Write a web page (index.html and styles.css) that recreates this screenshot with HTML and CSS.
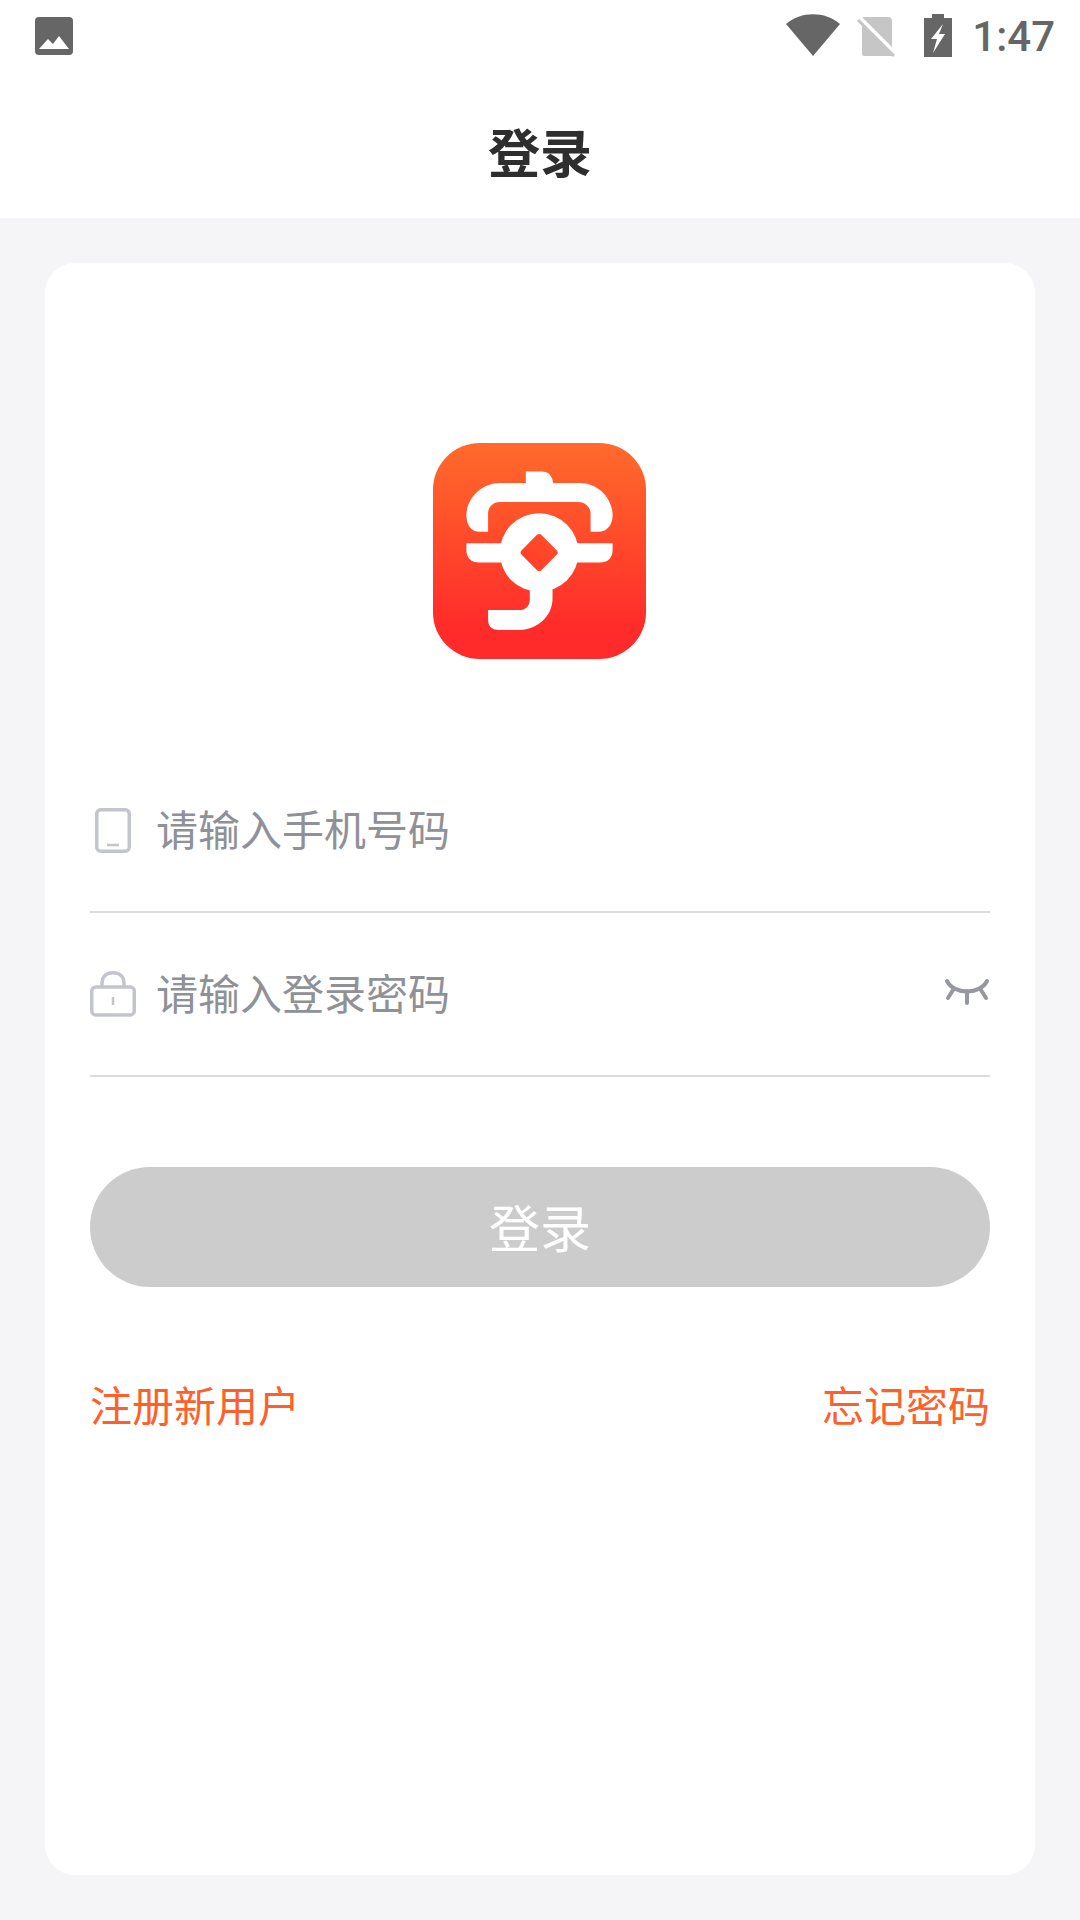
FILE: index.html
```html
<!DOCTYPE html>
<html lang="zh-CN">
<head>
    <meta charset="UTF-8">
    <meta name="viewport" content="width=device-width, initial-scale=1.0">
    <title>登录</title>
    <link rel="stylesheet" href="styles.css">
</head>
<body>
    <div class="status-bar">
        <svg class="icon-photo" width="38" height="38" viewBox="0 0 38 38">
            <rect width="38" height="38" rx="4" fill="#666"/>
            <path d="M4 32 L13 22 L18 27 L24 19 L34 32 Z" fill="#fff"/>
        </svg>
        <div class="status-right">
            <svg class="icon-wifi" width="54" height="42" viewBox="0 0 54 42">
                <path d="M0 10 C15 -3 39 -3 54 10 L27 42 Z" fill="#666"/>
            </svg>
            <svg class="icon-sim" width="40" height="42" viewBox="0 0 40 42">
                <path d="M5 4 C5 2.500 6 2 7 2 L31 2 C33.500 2 35 3.500 35 6 L35 41 L7 41 C6 41 5 40 5 39 Z" fill="#c6c6c6"/>
                <path d="M2 2 L38 38" stroke="#fff" stroke-width="4"/>
                <path d="M1 5 L37 41" stroke="#c6c6c6" stroke-width="3"/>
            </svg>
            <svg class="icon-battery" width="28" height="43" viewBox="0 0 28 43">
                <path d="M8 0 L20 0 L20 4 L28 4 L28 43 L0 43 L0 4 L8 4 Z" fill="#666"/>
                <path d="M19 10 L7 25 L13 25 L9 39 L21 20 L15 20 Z" fill="#fff"/>
            </svg>
            <span class="status-time">1:47</span>
        </div>
    </div>

    <div class="header">
        <h1>登录</h1>
    </div>

    <div class="container">
        <div class="card">
            <svg class="logo" width="213" height="216" viewBox="40 38 638 649" preserveAspectRatio="none">
                <defs>
                    <linearGradient id="logoBg" gradientUnits="userSpaceOnUse" x1="0" y1="38" x2="0" y2="687">
                        <stop offset="0" stop-color="#ff6b2b"/>
                        <stop offset="0.85" stop-color="#ff2c2a"/>
                        <stop offset="1" stop-color="#ff2a2a"/>
                    </linearGradient>
                </defs>
                <rect x="40" y="38" width="638" height="649" rx="140" fill="url(#logoBg)"/>
                <path fill="#fff" d="M318 158 L318 124 L368 124 Q395 124 400 158 L480 158 C535 158 578 205 578 255 C578 285 560 305 535 305 L512 305 L512 250 C512 230 495 215 475 215 L240 215 C220 215 205 230 205 250 L205 305 L180 305 C155 305 140 285 140 255 C140 205 185 158 240 158 Z"/>
                <path fill="#fff" d="M140 339 L578 339 L578 358 Q578 397 538 397 L180 397 Q140 397 140 358 Z"/>
                <circle cx="358" cy="367" r="118" fill="#fff"/>
                <path fill="#fff" d="M330 470 L398 470 L398 505 C398 560 350 600 295 600 L235 600 Q205 600 205 570 L205 540 L295 540 Q330 540 330 505 Z"/>
                <rect x="316" y="325" width="84" height="84" rx="10" transform="rotate(45 358 367)" fill="url(#logoBg)"/>
            </svg>

            <div class="field">
                <span class="field-icon">
                    <svg class="icon-phone" width="36" height="45" viewBox="0 0 36 45" fill="none" stroke="#c3c5cc" stroke-width="3.500">
                        <rect x="1.750" y="1.750" width="32.500" height="41.500" rx="4"/>
                        <path d="M12 37 L24 37" stroke-width="2.500"/>
                    </svg>
                </span>
                <span class="field-hint">请输入手机号码</span>
            </div>
            <div class="field">
                <span class="field-icon">
                    <svg width="46" height="46" viewBox="0 0 46 46" fill="none" stroke="#c3c5cc" stroke-width="3.500">
                        <rect x="1.750" y="16" width="42.500" height="28" rx="4"/>
                        <path d="M12 16 L12 12 C12 5 17 1.750 23 1.750 C29 1.750 34 5 34 12 L34 16"/>
                        <path d="M23 26 L23 34" stroke-width="2.500"/>
                    </svg>
                </span>
                <span class="field-hint">请输入登录密码</span>
                <svg class="eye" width="46" height="28" viewBox="0 0 46 28" fill="none" stroke="#96989e" stroke-width="4" stroke-linecap="round">
                    <path d="M3 3 C10 17 36 17 43 3"/>
                    <path d="M23 13 L23 25"/>
                    <path d="M9 12 L4 20"/>
                    <path d="M37 12 L42 20"/>
                </svg>
            </div>

            <button type="button" class="login-btn">登录</button>

            <div class="links">
                <span>注册新用户</span>
                <span>忘记密码</span>
            </div>
        </div>
    </div>
</body>
</html>
```

FILE: styles.css
```css
*{
    margin: 0;
    padding: 0;
    box-sizing: border-box;
}
body{
    width: 1080px;
    height: 1920px;
    overflow: hidden;
    background-color: #f5f5f7;
    font-family: "Noto Sans CJK SC", "Noto Sans", sans-serif;
}

.status-bar{
    height: 73px;
    padding: 14px 25px 0 35px;
    display: flex;
    justify-content: space-between;
    align-items: flex-start;
    background-color: #fff;
}
.icon-photo{
    margin-top: 3px;
}
.status-right{
    display: flex;
    align-items: flex-start;
}
.icon-sim{
    margin-left: 17px;
    margin-top: 1px;
}
.icon-battery{
    margin-left: 27px;
}
.status-time{
    margin-left: 20px;
    font-family: Roboto, sans-serif;
    font-weight: 500;
    font-size: 42px;
    line-height: 46px;
    color: #666;
}

.header{
    height: 145px;
    padding-top: 10px;
    display: flex;
    align-items: center;
    justify-content: center;
    background-color: #fff;
}
.header h1{
    font-size: 52px;
    font-weight: 700;
    color: #2e2e2e;
}

.container{
    padding: 45px;
}
.card{
    height: 1612px;
    padding: 180px 45px 0;
    border-radius: 30px;
    background-color: #fff;
}
.logo{
    display: block;
    margin: 0 0 90px 343px;
}

.field{
    height: 164px;
    padding-bottom: 6px;
    display: flex;
    align-items: center;
    border-bottom: 2px solid #dcdcdf;
}
.field-icon{
    width: 66px;
    margin-top: 6px;
    display: flex;
    justify-content: flex-start;
}
.icon-phone{
    margin-left: 5px;
}
.field-hint{
    flex: 1;
    font-size: 42px;
    color: #8f9197;
}
.eye{
    margin-top: 2px;
}

.login-btn{
    display: block;
    width: 100%;
    height: 120px;
    margin-top: 90px;
    padding-bottom: 3px;
    border: none;
    border-radius: 60px;
    background-color: #cccccc;
    color: #fff;
    font-family: inherit;
    font-size: 51px;
}

.links{
    margin-top: 86px;
    display: flex;
    justify-content: space-between;
    font-size: 42px;
    color: #ff5f2a;
}
```
